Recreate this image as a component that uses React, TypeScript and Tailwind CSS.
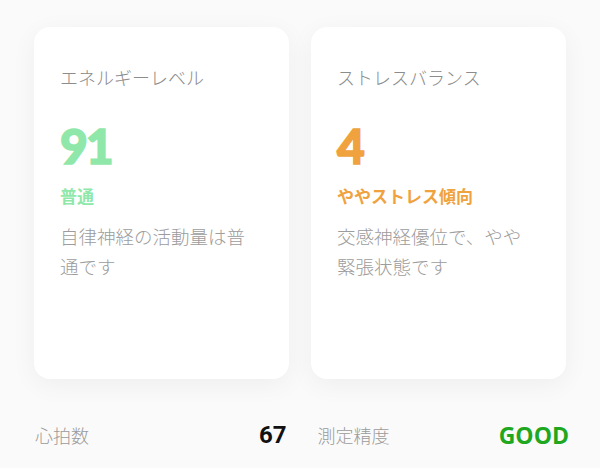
import React from 'react';

const jp = '"Noto Sans CJK JP", "Noto Sans", sans-serif';

interface MetricCardProps {
  title: string;
  value: string;
  status: string;
  description: string[];
  tone: 'green' | 'orange';
}

function MetricCard({ title, value, status, description, tone }: MetricCardProps) {
  const accent = tone === 'green' ? 'text-[#8fe8aa]' : 'text-[#f0a23e]';

  return (
    <div className="h-[352px] rounded-2xl bg-white pl-[26px] pr-[20px] pt-[37px] shadow-[0_6px_26px_rgba(0,0,0,0.05)]">
      <p className="text-[18px] font-light leading-[26px] text-[#8c8c8c]">{title}</p>
      <p
        className={`mt-[32px] text-[48px] font-black leading-none tracking-[-2px] [-webkit-text-stroke:1.5px_currentColor] ${accent}`}
        style={{ fontFamily: 'Lato, "Open Sans", sans-serif' }}
      >
        {value}
      </p>
      <p className={`mt-[14px] text-[17px] font-bold leading-[24px] ${accent}`}>{status}</p>
      <div className="mt-[13px] text-[18.5px] font-light leading-[30px] text-[#9c9c9c]">
        {description.map((line) => (
          <p key={line}>{line}</p>
        ))}
      </div>
    </div>
  );
}

export default function App() {
  return (
    <div className="min-h-[468px] w-[600px] bg-[#fafafa]" style={{ fontFamily: jp }}>
      <div className="grid grid-cols-2 gap-[22px] px-[34px] pt-[27px]">
        <MetricCard
          title="エネルギーレベル"
          value="91"
          status="普通"
          description={['自律神経の活動量は普', '通です']}
          tone="green"
        />
        <MetricCard
          title="ストレスバランス"
          value="4"
          status="ややストレス傾向"
          description={['交感神経優位で、やや', '緊張状態です']}
          tone="orange"
        />
      </div>

      <div className="mt-[38px] grid grid-cols-2 gap-[31px] pl-[35px] pr-[31px]">
        <div className="flex items-center justify-between">
          <span className="text-[18px] font-light text-[#9a9a9a]">心拍数</span>
          <span
            className="text-[24px] font-bold text-[#111111]"
            style={{ fontFamily: 'Roboto, "Liberation Sans", sans-serif' }}
          >
            67
          </span>
        </div>
        <div className="flex items-center justify-between">
          <span className="text-[18px] font-light text-[#9a9a9a]">測定精度</span>
          <span
            className="text-[23px] font-bold text-[#1fa81f]"
            style={{ fontFamily: '"Open Sans", "Noto Sans", sans-serif' }}
          >
            GOOD
          </span>
        </div>
      </div>
    </div>
  );
}
